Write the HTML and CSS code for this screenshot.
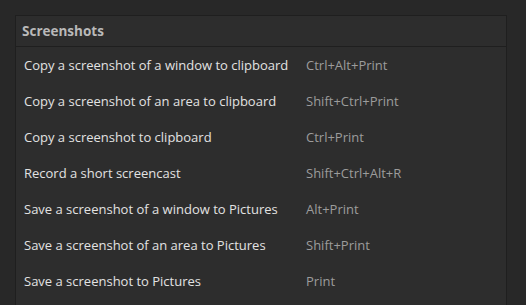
FILE: index.html
```html
<!DOCTYPE html>
<html>
<head>
<meta charset="utf-8">
<link rel="stylesheet" href="styles.css">
</head>
<body>
<div class="page">
  <section class="panel">
    <div class="header">Screenshots</div>
    <div class="rows">
      <div class="row"><span class="name">Copy a screenshot of a window to clipboard</span><span class="key">Ctrl+Alt+Print</span></div>
      <div class="row"><span class="name">Copy a screenshot of an area to clipboard</span><span class="key">Shift+Ctrl+Print</span></div>
      <div class="row"><span class="name">Copy a screenshot to clipboard</span><span class="key">Ctrl+Print</span></div>
      <div class="row"><span class="name">Record a short screencast</span><span class="key">Shift+Ctrl+Alt+R</span></div>
      <div class="row"><span class="name">Save a screenshot of a window to Pictures</span><span class="key">Alt+Print</span></div>
      <div class="row"><span class="name">Save a screenshot of an area to Pictures</span><span class="key">Shift+Print</span></div>
      <div class="row"><span class="name">Save a screenshot to Pictures</span><span class="key">Print</span></div>
    </div>
  </section>
</div>
</body>
</html>
```
FILE: styles.css
```css
html, body {
  margin: 0;
  padding: 0;
  background: #282828;
  height: 100%;
  overflow: hidden;
}
.page {
  padding: 15px 19px 0 15px;
  font-family: "Open Sans", sans-serif;
  font-size: 13px;
}
.panel {
  background: #2d2d2d;
  border: 1px solid #1f1f1f;
  border-bottom: none;
  height: 300px;
}
.header {
  height: 30px;
  line-height: 30px;
  padding-left: 6px;
  font-weight: bold;
  font-size: 13.5px;
  color: #b9b9b9;
  border-bottom: 1px solid #1f1f1f;
}
.row {
  display: grid;
  grid-template-columns: 282px auto;
  height: 36px;
  align-items: center;
  padding-left: 8px;
}
.name {
  color: #e2e2e2;
}
.key {
  color: #9c9c9c;
}
```
